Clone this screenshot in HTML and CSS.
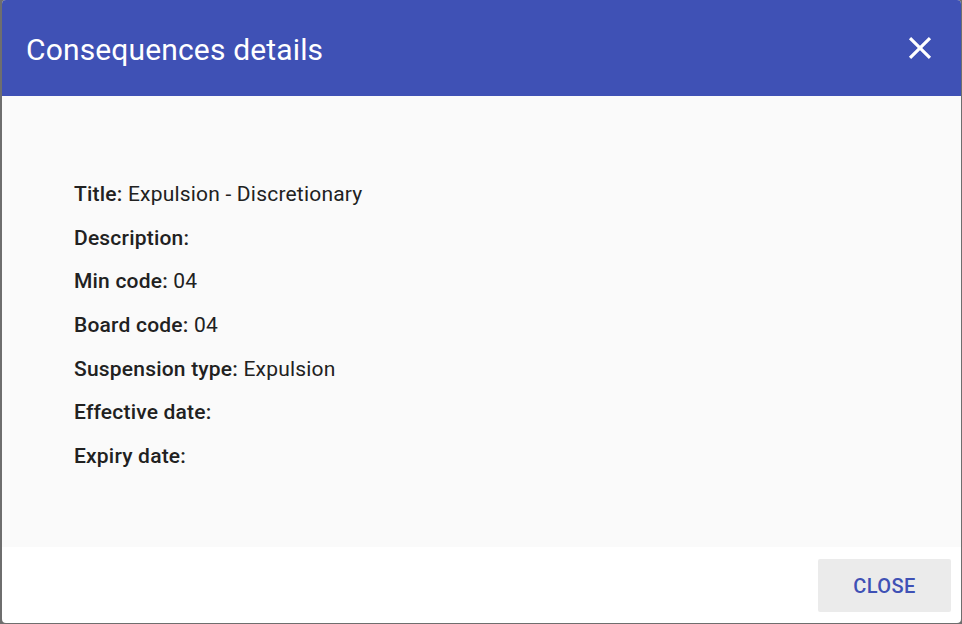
FILE: index.html
```html
<!DOCTYPE html>
<html>
<head>
<meta charset="utf-8">
<link rel="stylesheet" href="styles.css">
</head>
<body>
<div class="dialog">
  <div class="header">
    <h1 class="title">Consequences details</h1>
    <button class="close-icon" aria-label="Close">
      <svg viewBox="0 0 24 24" width="38" height="38"><path fill="#fff" d="M19 6.41L17.59 5 12 10.59 6.41 5 5 6.41 10.59 12 5 17.59 6.41 19 12 13.41 17.59 19 19 17.59 13.41 12z"/></svg>
    </button>
  </div>
  <div class="content">
    <p class="row"><span class="label">Title:</span> Expulsion - Discretionary</p>
    <p class="row"><span class="label">Description:</span></p>
    <p class="row"><span class="label">Min code:</span> 04</p>
    <p class="row"><span class="label">Board code:</span> 04</p>
    <p class="row"><span class="label">Suspension type:</span> Expulsion</p>
    <p class="row"><span class="label">Effective date:</span></p>
    <p class="row"><span class="label">Expiry date:</span></p>
  </div>
  <div class="footer">
    <button class="btn">Close</button>
  </div>
</div>
</body>
</html>
```
FILE: styles.css
```css
html, body {
  margin: 0;
  padding: 0;
  height: 100%;
}
body {
  background: #6e6e6e;
  font-family: Roboto, "Liberation Sans", Arial, sans-serif;
  overflow: hidden;
}
.dialog {
  margin: 0 1px 0 2px;
  height: 623px;
  border-radius: 4px;
  overflow: hidden;
  display: flex;
  flex-direction: column;
  background: #fff;
}
.header {
  height: 96px;
  background: #3f51b5;
  display: flex;
  align-items: center;
  justify-content: space-between;
  padding: 0 22px 0 24px;
  flex-shrink: 0;
}
.title {
  margin: 0;
  color: #fff;
  font-size: 30px;
  font-weight: 400;
  letter-spacing: 0.15px;
  padding-top: 3px;
}
.close-icon {
  background: none;
  border: 0;
  padding: 0;
  width: 38px;
  height: 38px;
  cursor: pointer;
}
.close-icon svg { display: block; }
.content {
  background: #fafafa;
  height: 451px;
  padding: 86px 72px 0;
  box-sizing: border-box;
  color: #212121;
}
.row {
  margin: 0;
  font-size: 21px;
  letter-spacing: 0.2px;
  line-height: 24px;
  height: 43.7px;
}
.label { font-weight: 500; }
.footer {
  flex: 1;
  display: flex;
  justify-content: flex-end;
  align-items: flex-start;
  padding: 12px 10px 0 0;
}
.btn {
  width: 133px;
  height: 53px;
  background: #ebebeb;
  border: 0;
  border-radius: 2px;
  color: #3f51b5;
  font-family: Roboto, "Liberation Sans", Arial, sans-serif;
  font-size: 20px;
  font-weight: 500;
  text-transform: uppercase;
  letter-spacing: 0.4px;
}
```
